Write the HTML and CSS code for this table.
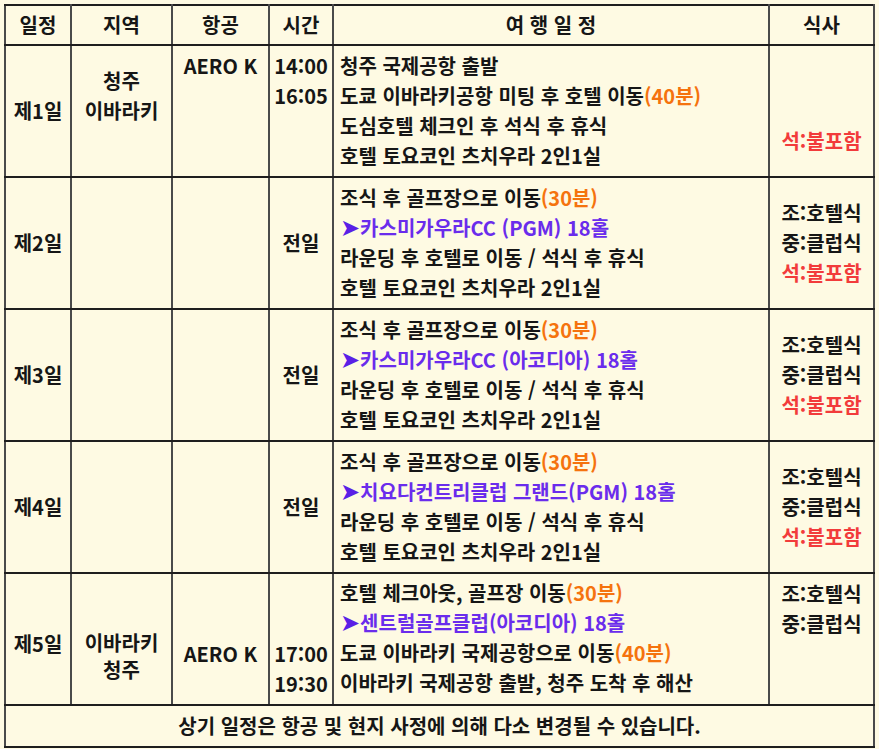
FILE: index.html
```html
<!DOCTYPE html>
<html lang="ko">
<head>
<meta charset="utf-8">
<link rel="stylesheet" href="styles.css">
</head>
<body>
<table class="sched">
  <colgroup>
    <col class="c-day"><col class="c-area"><col class="c-air"><col class="c-time"><col class="c-plan"><col class="c-meal">
  </colgroup>
  <thead>
    <tr>
      <th>일정</th><th>지역</th><th>항공</th><th>시간</th><th>여 행 일 정</th><th>식사</th>
    </tr>
  </thead>
  <tbody>
    <tr>
      <td class="day">제1일</td>
      <td class="mid">청주<br>이바라키<br>&nbsp;</td>
      <td class="top">AERO K</td>
      <td class="top">14:00<br>16:05</td>
      <td class="plan">청주 국제공항 출발<br>도쿄 이바라키공항 미팅 후 호텔 이동<span class="or">(40분)</span><br>도심호텔 체크인 후 석식 후 휴식<br>호텔 토요코인 츠치우라 2인1실</td>
      <td class="mid">&nbsp;<br>&nbsp;<br><span class="rd">석:불포함</span></td>
    </tr>
    <tr>
      <td class="day">제2일</td>
      <td></td>
      <td></td>
      <td class="mid">전일</td>
      <td class="plan">조식 후 골프장으로 이동<span class="or">(30분)</span><br><span class="pu"><span class="arr">➤</span>카스미가우라CC (PGM) 18홀</span><br>라운딩 후 호텔로 이동 / 석식 후 휴식<br>호텔 토요코인 츠치우라 2인1실</td>
      <td class="mid">조:호텔식<br>중:클럽식<br><span class="rd">석:불포함</span></td>
    </tr>
    <tr>
      <td class="day">제3일</td>
      <td></td>
      <td></td>
      <td class="mid">전일</td>
      <td class="plan">조식 후 골프장으로 이동<span class="or">(30분)</span><br><span class="pu"><span class="arr">➤</span>카스미가우라CC (아코디아) 18홀</span><br>라운딩 후 호텔로 이동 / 석식 후 휴식<br>호텔 토요코인 츠치우라 2인1실</td>
      <td class="mid">조:호텔식<br>중:클럽식<br><span class="rd">석:불포함</span></td>
    </tr>
    <tr>
      <td class="day">제4일</td>
      <td></td>
      <td></td>
      <td class="mid">전일</td>
      <td class="plan">조식 후 골프장으로 이동<span class="or">(30분)</span><br><span class="pu"><span class="arr">➤</span>치요다컨트리클럽 그랜드(PGM) 18홀</span><br>라운딩 후 호텔로 이동 / 석식 후 휴식<br>호텔 토요코인 츠치우라 2인1실</td>
      <td class="mid">조:호텔식<br>중:클럽식<br><span class="rd">석:불포함</span></td>
    </tr>
    <tr class="last">
      <td class="day low">제5일</td>
      <td class="mid area5">이바라키<br>청주</td>
      <td class="mid">&nbsp;<br>AERO K</td>
      <td class="top">&nbsp;<br>&nbsp;<br>17:00<br>19:30</td>
      <td class="plan">호텔 체크아웃, 골프장 이동<span class="or">(30분)</span><br><span class="pu"><span class="arr">➤</span>센트럴골프클럽(아코디아) 18홀</span><br>도쿄 이바라키 국제공항으로 이동<span class="or">(40분)</span><br>이바라키 국제공항 출발, 청주 도착 후 해산</td>
      <td class="top">조:호텔식<br>중:클럽식</td>
    </tr>
    <tr>
      <td class="foot" colspan="6">상기 일정은 항공 및 현지 사정에 의해 다소 변경될 수 있습니다.</td>
    </tr>
  </tbody>
</table>
</body>
</html>
```

FILE: styles.css
```css
html, body {
  background: #fefae3;
}
body {
  margin: 4px;
  font-family: "Noto Sans CJK KR", "Noto Sans", sans-serif;
  font-weight: 700;
  font-size: 20px;
  color: #161616;
}
.sched {
  border-collapse: collapse;
  table-layout: fixed;
  width: 871px;
}
.c-day { width: 66px; }
.c-area { width: 101px; }
.c-air { width: 97px; }
.c-time { width: 64px; }
.c-plan { width: 436px; }
.c-meal { width: 105px; }

.sched th, .sched td {
  border-top: 2px solid #1e1e1e;
  border-bottom: 2px solid #1e1e1e;
  border-left: 2px solid #4a4a4a;
  border-right: 2px solid #4a4a4a;
  line-height: 30px;
  text-align: center;
  padding: 5px 2px;
  vertical-align: middle;
}
.sched th {
  height: 29px;
  padding: 4px 2px;
  font-weight: 700;
  font-size: 20px;
}
.sched td.top { vertical-align: top; }
.sched td.mid { vertical-align: middle; }
.sched td.day { vertical-align: middle; }
.sched td.low { padding-top: 14px; }
.sched td.area5 {
  line-height: 27px;
  padding-top: 38px;
}
.sched td.plan {
  text-align: left;
  padding: 5px 6px;
  vertical-align: top;
  white-space: nowrap;
}
.sched .last td.plan {
  padding-top: 4px;
  padding-bottom: 4px;
}
.sched td.foot {
  height: 32px;
  padding: 4px;
  line-height: 30px;
}
.or { color: #f5730e; }
.pu { color: #6a2cec; }
.arr {
  color: #5a1fe6;
  font-family: "DejaVu Sans", sans-serif;
  font-size: 24px;
  line-height: 1;
}
.rd { color: #f23b3b; }
```
